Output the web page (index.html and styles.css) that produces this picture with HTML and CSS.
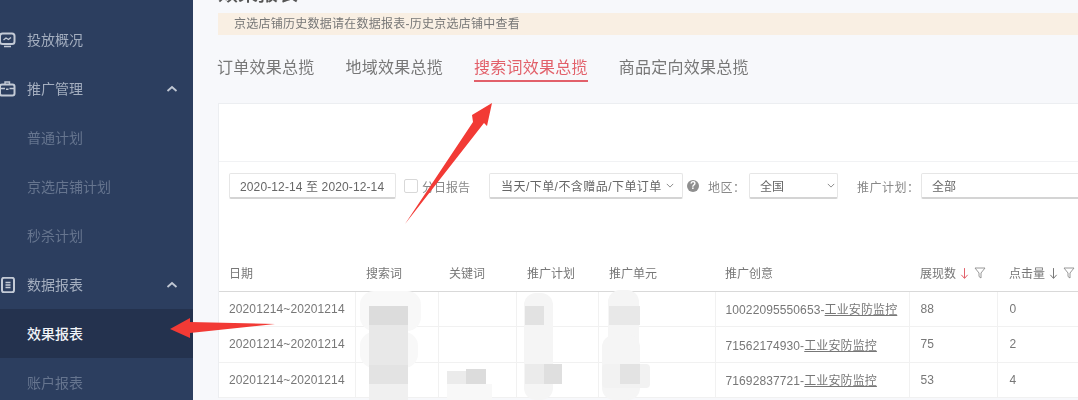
FILE: index.html
```html
<!DOCTYPE html>
<html lang="zh-CN">
<head>
<meta charset="utf-8">
<title>效果报表</title>
<link rel="stylesheet" href="styles.css">
</head>
<body>
<div class="app">
  <aside class="sidebar">
    <div class="nav-item top">
      <svg class="nav-icon" viewBox="0 0 16 16"><rect x="0" y="1.500" width="14.500" height="10.500" rx="2.500"/><path class="thin" d="M3.500 8l2.500-2 2.500 1.500 2.500-2M4 14.500h7"/></svg>
      <span>投放概况</span>
    </div>
    <div class="nav-item top">
      <svg class="nav-icon" viewBox="0 0 16 16"><rect x="0" y="3.500" width="14.500" height="11" rx="2"/><path class="thin" d="M5 3.500V1h4.500v2.500M0 7.500h5M9.500 7.500h5M6 8.200h2.500"/></svg>
      <span>推广管理</span>
      <svg class="chevron" viewBox="0 0 12 8"><path d="M1.500 6L6 2l4.500 4"/></svg>
    </div>
    <div class="nav-item sub"><span>普通计划</span></div>
    <div class="nav-item sub"><span>京选店铺计划</span></div>
    <div class="nav-item sub"><span>秒杀计划</span></div>
    <div class="nav-item top">
      <svg class="nav-icon" viewBox="0 0 16 16"><rect x="2" y="0.800" width="12" height="14.500" rx="2"/><path class="thin" d="M5.500 5.500h5M5.500 8h5M5.500 10.500h5"/></svg>
      <span>数据报表</span>
      <svg class="chevron" viewBox="0 0 12 8"><path d="M1.500 6L6 2l4.500 4"/></svg>
    </div>
    <div class="nav-item active"><span>效果报表</span></div>
    <div class="nav-item sub"><span>账户报表</span></div>
  </aside>

  <main class="main">
    <h1 class="page-title">效果报表</h1>
    <div class="alert">京选店铺历史数据请在数据报表-历史京选店铺中查看</div>
    <nav class="tabs">
      <a class="tab">订单效果总揽</a>
      <a class="tab">地域效果总揽</a>
      <a class="tab current">搜索词效果总揽</a>
      <a class="tab">商品定向效果总揽</a>
    </nav>
    <section class="card">
      <div class="card-head"></div>
      <div class="toolbar">
        <div class="field date">2020-12-14 至 2020-12-14</div>
        <label class="check"><i class="box"></i>分日报告</label>
        <div class="field scope">当天/下单/不含赠品/下单订单<svg class="caret" viewBox="0 0 10 6"><path d="M1 1l4 4 4-4"/></svg></div>
        <span class="help">?</span>
        <span class="label region-label">地区：</span>
        <div class="field region">全国<svg class="caret" viewBox="0 0 10 6"><path d="M1 1l4 4 4-4"/></svg></div>
        <span class="label plan-label">推广计划：</span>
        <div class="field plan">全部</div>
      </div>
      <table class="report">
        <colgroup>
          <col class="c-date"><col class="c-word"><col class="c-key"><col class="c-plan"><col class="c-unit"><col class="c-idea"><col class="c-show"><col class="c-click">
        </colgroup>
        <thead>
          <tr>
            <th>日期</th><th>搜索词</th><th>关键词</th><th>推广计划</th><th>推广单元</th><th>推广创意</th>
            <th>展现数 <svg class="sort on" viewBox="0 0 10 14"><path d="M5 1v11M1.500 8.500L5 12.500l3.500-4"/></svg><svg class="funnel" viewBox="0 0 12 12"><path d="M1 1h10L7 6v5L5 9.500V6z"/></svg></th>
            <th>点击量 <svg class="sort" viewBox="0 0 10 14"><path d="M5 1v11M1.500 8.500L5 12.500l3.500-4"/></svg><svg class="funnel" viewBox="0 0 12 12"><path d="M1 1h10L7 6v5L5 9.500V6z"/></svg></th>
          </tr>
        </thead>
        <tbody>
          <tr><td>20201214~20201214</td><td></td><td></td><td></td><td></td><td>10022095550653-<u>工业安防监控</u></td><td>88</td><td>0</td></tr>
          <tr><td>20201214~20201214</td><td></td><td></td><td></td><td></td><td>71562174930-<u>工业安防监控</u></td><td>75</td><td>2</td></tr>
          <tr><td>20201214~20201214</td><td></td><td></td><td></td><td></td><td>71692837721-<u>工业安防监控</u></td><td>53</td><td>4</td></tr>
        </tbody>
      </table>
    </section>
  </main>

  <svg class="overlay" viewBox="0 0 1078 400" width="1078" height="400">
    <g class="mosaic">
      <rect x="360" y="291" width="61" height="40" rx="14" fill="#f8f8f8"/>
      <rect x="360" y="332" width="58" height="36" rx="14" fill="#f8f8f8"/>
      <rect x="369" y="306" width="39" height="19" fill="#dcdcdc"/>
      <rect x="369" y="325" width="39" height="40" fill="#e8e8e8"/>
      <rect x="369" y="365" width="39" height="19" fill="#e3e3e3"/>
      <rect x="369" y="384" width="39" height="16" fill="#f0f0f0"/>
      <rect x="447" y="384" width="45" height="16" fill="#f8f8f8"/>
      <rect x="447" y="371" width="19" height="13" fill="#ebebeb"/>
      <rect x="466" y="369" width="20" height="15" fill="#dcdcdc"/>
      <rect x="524" y="293" width="29" height="107" rx="12" fill="#f5f5f5"/>
      <rect x="525" y="306" width="19" height="19" fill="#e2e2e2"/>
      <rect x="525" y="364" width="19" height="20" fill="#ebebeb"/>
      <rect x="544" y="364" width="18" height="20" fill="#dfdfdf"/>
      <rect x="608" y="290" width="31" height="110" rx="12" fill="#f5f5f5"/>
      <rect x="602" y="335" width="38" height="65" rx="12" fill="#f5f5f5"/>
      <rect x="609" y="306" width="31" height="19" fill="#e8e8e8"/>
      <rect x="602" y="364" width="48" height="24" rx="4" fill="#f2f2f2"/>
      <rect x="620" y="364" width="20" height="20" fill="#e3e3e3"/>
    </g>
    <polygon class="arrow" points="405,224 473,122 472,115 492,103 487,126 484,123"/>
    <polygon class="arrow" points="275,324 190,333 190,338 170,329 190,318 190,322"/>
  </svg>
</div>
</body>
</html>
```
FILE: styles.css
```css
* { box-sizing: border-box; }
html, body { margin: 0; height: 400px; overflow: hidden; background: #f7f8fb; }
body {
  font-family: "Liberation Sans", "Noto Sans CJK SC", sans-serif;
  font-size: 12px;
  color: #777;
}
.app {
  position: relative;
  display: flex;
  width: 1078px;
  height: 400px;
  overflow: hidden;
  filter: blur(0.35px);
}

/* sidebar */
.sidebar {
  flex: 0 0 193px;
  padding-top: 14.500px;
  background: #2c3e5f;
}
.nav-item {
  position: relative;
  display: flex;
  align-items: center;
  height: 49px;
  padding-left: 27px;
  font-size: 14px;
}
.nav-item.top { color: #a4aebf; }
.nav-item.sub { color: #66758f; }
.nav-item.active { background: #24324e; color: #f2f4f8; font-weight: 500; }
.nav-icon {
  position: absolute;
  left: 0;
  top: 17px;
  width: 16px;
  height: 16px;
  fill: none;
  stroke: #c3cad6;
  stroke-width: 2;
}
.nav-icon .thin { stroke-width: 1.400; }
.chevron {
  position: absolute;
  left: 166px;
  top: 21px;
  width: 12px;
  height: 8px;
  fill: none;
  stroke: #c0c7d3;
  stroke-width: 1.800;
}

/* main */
.main { flex: 1 1 0; min-width: 0; padding-left: 25px; }
.page-title {
  margin: -20px 0 0;
  height: 33px;
  font-size: 20px;
  line-height: 28px;
  font-weight: 500;
  color: #555;
}
.alert {
  height: 22px;
  padding-left: 16px;
  line-height: 23px;
  font-size: 12px;
  letter-spacing: 0.250px;
  background: #f9efe3;
  color: #777;
}
.tabs {
  display: flex;
  gap: 31px;
  height: 68px;
  margin-left: -1px;
  padding-top: 19px;
}
.tab {
  height: 28px;
  font-size: 16px;
  line-height: 28px;
  letter-spacing: 0.250px;
  color: #777;
  white-space: nowrap;
}
.tab.current {
  color: #e2606a;
  border-bottom: 2px solid #e2606a;
}

/* card */
.card {
  width: 900px;
  background: #fff;
  border-top: 1px solid #eceef1;
  border-left: 1px solid #eceef1;
}
.card-head { height: 58px; border-bottom: 1px solid #f1f2f4; }
.toolbar {
  display: flex;
  align-items: center;
  height: 46px;
  padding: 11px 0 9px 10px;
}
.toolbar > * { flex-shrink: 0; }
.field {
  display: flex;
  align-items: center;
  height: 26px;
  border: 1px solid #e6e6e6;
  border-bottom: 2px solid #d4d4d4;
  border-radius: 2px;
  background: #fff;
  color: #666;
  white-space: nowrap;
}
.date { width: 167px; padding-left: 10px; letter-spacing: 0.120px; }
.check { display: flex; align-items: center; margin-left: 8px; color: #888; white-space: nowrap; }
.box {
  width: 14px;
  height: 14px;
  margin-right: 4px;
  border: 1px solid #d8d8d8;
  border-radius: 2px;
}
.scope { width: 194px; margin-left: 19px; padding-left: 11px; letter-spacing: 0.450px; }
.caret {
  width: 8px;
  height: 5px;
  margin-left: 4px;
  fill: none;
  stroke: #888;
  stroke-width: 1.200;
}
.help {
  width: 12px;
  height: 12px;
  margin-left: 4px;
  border-radius: 50%;
  background: #8f8f8f;
  color: #fff;
  font-size: 10px;
  font-weight: 700;
  line-height: 12px;
  text-align: center;
}
.label { color: #888; white-space: nowrap; }
.region-label { width: 41px; margin-left: 9px; letter-spacing: 0.500px; }
.region { width: 89px; padding-left: 10px; }
.region .caret { margin-left: 43px; }
.plan-label { width: 64px; margin-left: 19px; letter-spacing: 0.500px; }
.plan { width: 300px; padding-left: 10px; }

/* table */
.report {
  width: 860px;
  margin-top: 47px;
  border-collapse: collapse;
  table-layout: fixed;
}
.c-date { width: 136px; }
.c-word { width: 83px; }
.c-key { width: 78px; }
.c-plan { width: 82px; }
.c-unit { width: 117px; }
.c-idea { width: 194px; }
.c-show { width: 88px; }
.c-click { width: 82px; }
.report th {
  height: 36px;
  padding: 0 0 0 11px;
  border-bottom: 1px solid #d9d9d9;
  font-weight: 400;
  text-align: left;
  color: #777;
  white-space: nowrap;
}
.report td {
  height: 35.500px;
  padding: 0 0 0 11px;
  border-right: 1px solid #f1f1f1;
  border-bottom: 1px solid #f1f1f1;
  color: #777;
  white-space: nowrap;
  letter-spacing: 0.110px;
}
.report td:first-child,
.report th:first-child,
.report td:nth-child(6),
.report th:nth-child(6) { padding-left: 10px; }
.report th:last-child { padding-left: 12px; }
.report td:last-child { padding-left: 12px; border-right: 0; }
.sort {
  width: 9px;
  height: 13px;
  margin-left: 1px;
  vertical-align: -2px;
  fill: none;
  stroke: #777;
  stroke-width: 1.100;
}
.sort.on { stroke: #e2606a; }
.funnel {
  width: 12px;
  height: 12px;
  margin-left: 5px;
  vertical-align: -1px;
  fill: none;
  stroke: #8d8d8d;
  stroke-width: 0.900;
}

/* annotations over the screenshot */
.overlay { position: absolute; left: 0; top: 0; pointer-events: none; }
.mosaic { filter: blur(0.6px); }
.arrow { fill: #f23a35; }
```
